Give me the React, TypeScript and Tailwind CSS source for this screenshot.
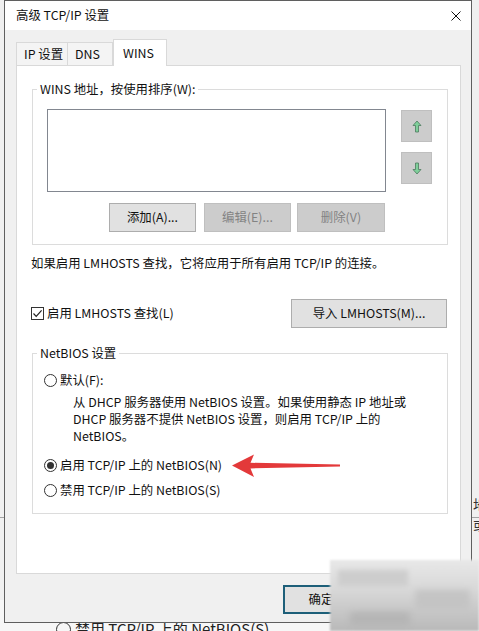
import React from "react";

const font = "font-['Noto_Sans_CJK_SC','Noto_Sans',sans-serif]";

const Radio = ({ checked }: { checked?: boolean }) => (
  <span className="flex h-[13px] w-[13px] shrink-0 items-center justify-center rounded-full border border-[#333333] bg-white">
    {checked && <span className="h-[7px] w-[7px] rounded-full bg-[#333333]" />}
  </span>
);

const Button = ({
  label,
  disabled,
  className,
}: {
  label: string;
  disabled?: boolean;
  className?: string;
}) => (
  <div
    className={`flex h-[29px] items-center justify-center border text-[12.4px] ${
      disabled
        ? "border-[#bfbfbf] bg-[#cccccc] text-[#838383]"
        : "border-[#adadad] bg-[#e1e1e1] text-[#111111]"
    } ${className ?? ""}`}
  >
    {label}
  </div>
);

// move-up / move-down icons in the WINS list
const OrderArrow = ({ down }: { down?: boolean }) => (
  <svg width="10" height="13" viewBox="0 0 10 13" className={down ? "rotate-180" : ""}>
    <path
      d="M5 1 L9 5.5 L6.5 5.5 L6.5 12 L3.5 12 L3.5 5.5 L1 5.5 Z"
      fill="#7fcf9a"
      stroke="#4d7a5e"
      strokeWidth="0.8"
    />
  </svg>
);

const Tab = ({ label, active, w }: { label: string; active?: boolean; w: string }) => (
  <div
    className={`flex items-center border border-b-0 border-[#d9d9d9] text-[12.4px] ${w} ${
      active ? "h-[27px] bg-white pl-[9px]" : "mb-px h-[23px] bg-[#f4f4f4] pl-[7px]"
    }`}
  >
    {label}
  </div>
);

export default function App() {
  return (
    <div className={`relative h-[631px] w-[479px] overflow-hidden bg-[#f0f0f0] text-[#111111] ${font}`}>
      {/* window behind the dialog */}
      <div className="absolute left-0 top-[517px] h-px w-full bg-[#a3a3a3]" />
      <div className="absolute left-[473px] top-[496px] flex flex-col gap-[4px] text-[14px] leading-[16px] text-[#333333]">
        <span>地</span>
        <span>或</span>
      </div>
      <div className="absolute left-0 top-[600px] h-[31px] w-full bg-[#f7f7f7]" />
      <div className="absolute left-[56px] top-[620px] flex items-center gap-[4px] text-[15px] leading-[18px] text-[#222222]">
        <span className="h-[15px] w-[15px] rounded-full border border-[#333333]" />
        <span>禁用 TCP/IP 上的 NetBIOS(S)</span>
      </div>

      {/* dialog */}
      <div className="absolute left-[4px] top-0 z-10 flex h-[623px] w-[468px] flex-col border border-[#5f5f5f] bg-[#f0f0f0]">
        <div className="flex h-[29px] shrink-0 items-center justify-between bg-white pl-[11px] pr-[10px] text-[12.4px]">
          <span>高级 TCP/IP 设置</span>
          <svg width="10" height="10" viewBox="0 0 10 10">
            <path d="M0.5 0.5 L9.5 9.5 M9.5 0.5 L0.5 9.5" stroke="#111111" strokeWidth="1" />
          </svg>
        </div>

        <div className="relative z-10 mt-[9px] -mb-px flex h-[27px] items-end pl-[11px]">
          <Tab label="IP 设置" w="w-[52px]" />
          <Tab label="DNS" w="w-[46px] -ml-px" />
          <Tab label="WINS" w="w-[54px]" active />
        </div>

        <div className="ml-[11px] flex h-[509px] w-[445px] flex-col border border-[#d9d9d9] bg-white text-[12.4px]">
          <fieldset className="ml-[15px] mt-[15px] w-[416px] border border-[#dcdcdc] p-0">
            <legend className="ml-[4px] px-[3px] leading-[16px]">WINS 地址，按使用排序(W):</legend>
            <div className="pb-[12px] pl-[14px]">
              <div className="mt-[12px] flex items-start">
                <div className="h-[83px] w-[339px] border border-[#828790] bg-white" />
                <div className="ml-[15px] mt-px flex flex-col">
                  <div className="flex h-[32px] w-[31px] items-center justify-center border border-[#bfbfbf] bg-[#cccccc]">
                    <OrderArrow />
                  </div>
                  <div className="mt-[10px] flex h-[32px] w-[31px] items-center justify-center border border-[#bfbfbf] bg-[#cccccc]">
                    <OrderArrow down />
                  </div>
                </div>
              </div>
              <div className="ml-[62px] mt-[11px] flex">
                <Button label="添加(A)..." className="w-[87px]" />
                <Button label="编辑(E)..." disabled className="ml-[8px] w-[87px]" />
                <Button label="删除(V)" disabled className="ml-[6px] w-[88px]" />
              </div>
            </div>
          </fieldset>

          <p className="ml-[14px] mt-[10px] leading-[16px]">
            如果启用 LMHOSTS 查找，它将应用于所有启用 TCP/IP 的连接。
          </p>

          <div className="mt-[28px] flex h-[29px] items-center pl-[14px] pr-[13px]">
            <span className="flex h-[13px] w-[13px] items-center justify-center border border-[#333333] bg-white">
              <svg width="11" height="11" viewBox="0 0 11 11">
                <path d="M1.5 5.5 L4.2 8.3 L9.6 2.4" fill="none" stroke="#222222" strokeWidth="1.2" />
              </svg>
            </span>
            <span className="ml-[3px]">启用 LMHOSTS 查找(L)</span>
            <Button label="导入 LMHOSTS(M)..." className="ml-auto w-[156px]" />
          </div>

          <fieldset className="ml-[15px] mt-[17px] w-[416px] border border-[#dcdcdc] p-0">
            <legend className="ml-[4px] px-[3px] leading-[16px]">NetBIOS 设置</legend>
            <div className="pb-[14px] leading-[17px]">
              <div className="mt-[11px] flex items-center gap-[3px] pl-[11px]">
                <Radio />
                <span>默认(F):</span>
              </div>
              <div className="mt-[5px] whitespace-nowrap pl-[40px]">
                <div>从 DHCP 服务器使用 NetBIOS 设置。如果使用静态 IP 地址或</div>
                <div>DHCP 服务器不提供 NetBIOS 设置，则启用 TCP/IP 上的</div>
                <div>NetBIOS。</div>
              </div>
              <div className="mt-[12px] flex items-center gap-[3px] pl-[11px]">
                <Radio checked />
                <span>启用 TCP/IP 上的 NetBIOS(N)</span>
              </div>
              <div className="mt-[8px] flex items-center gap-[3px] pl-[11px]">
                <Radio />
                <span>禁用 TCP/IP 上的 NetBIOS(S)</span>
              </div>
            </div>
          </fieldset>
        </div>

        <div className="ml-[278px] mt-[11px] flex h-[29px] w-[76px] items-center justify-center border-2 border-[#1d5f79] bg-[#e1e1e1] text-[12.4px]">
          确定
        </div>
      </div>

      {/* red pointer arrow */}
      <svg
        className="absolute left-[230px] top-[453px] z-20"
        width="112"
        height="26"
        viewBox="0 0 112 26"
      >
        <path
          d="M2 12.5 L24 1.5 L20.5 9.8 L110 11.6 L110 13.4 L20.5 15.4 L24 24 Z"
          fill="#e3393a"
        />
      </svg>

      {/* blurred corner patch */}
      <div className="absolute left-[330px] top-[560px] z-20 h-[71px] w-[149px] bg-[linear-gradient(180deg,#e8e8e8_0%,#d9d9d9_40%,#c9c9c9_70%,#b9b9b9_100%)] blur-[1px]">
        <div className="ml-[8px] mt-[10px] h-[16px] w-[70px] bg-[#cdcdcd] blur-[2px]" />
        <div className="ml-[85px] mt-[4px] h-[20px] w-[55px] bg-[#c4c4c4] blur-[3px]" />
        <div className="ml-[20px] mt-[2px] h-[14px] w-[60px] bg-[#b5b5b5] blur-[3px]" />
      </div>
    </div>
  );
}
